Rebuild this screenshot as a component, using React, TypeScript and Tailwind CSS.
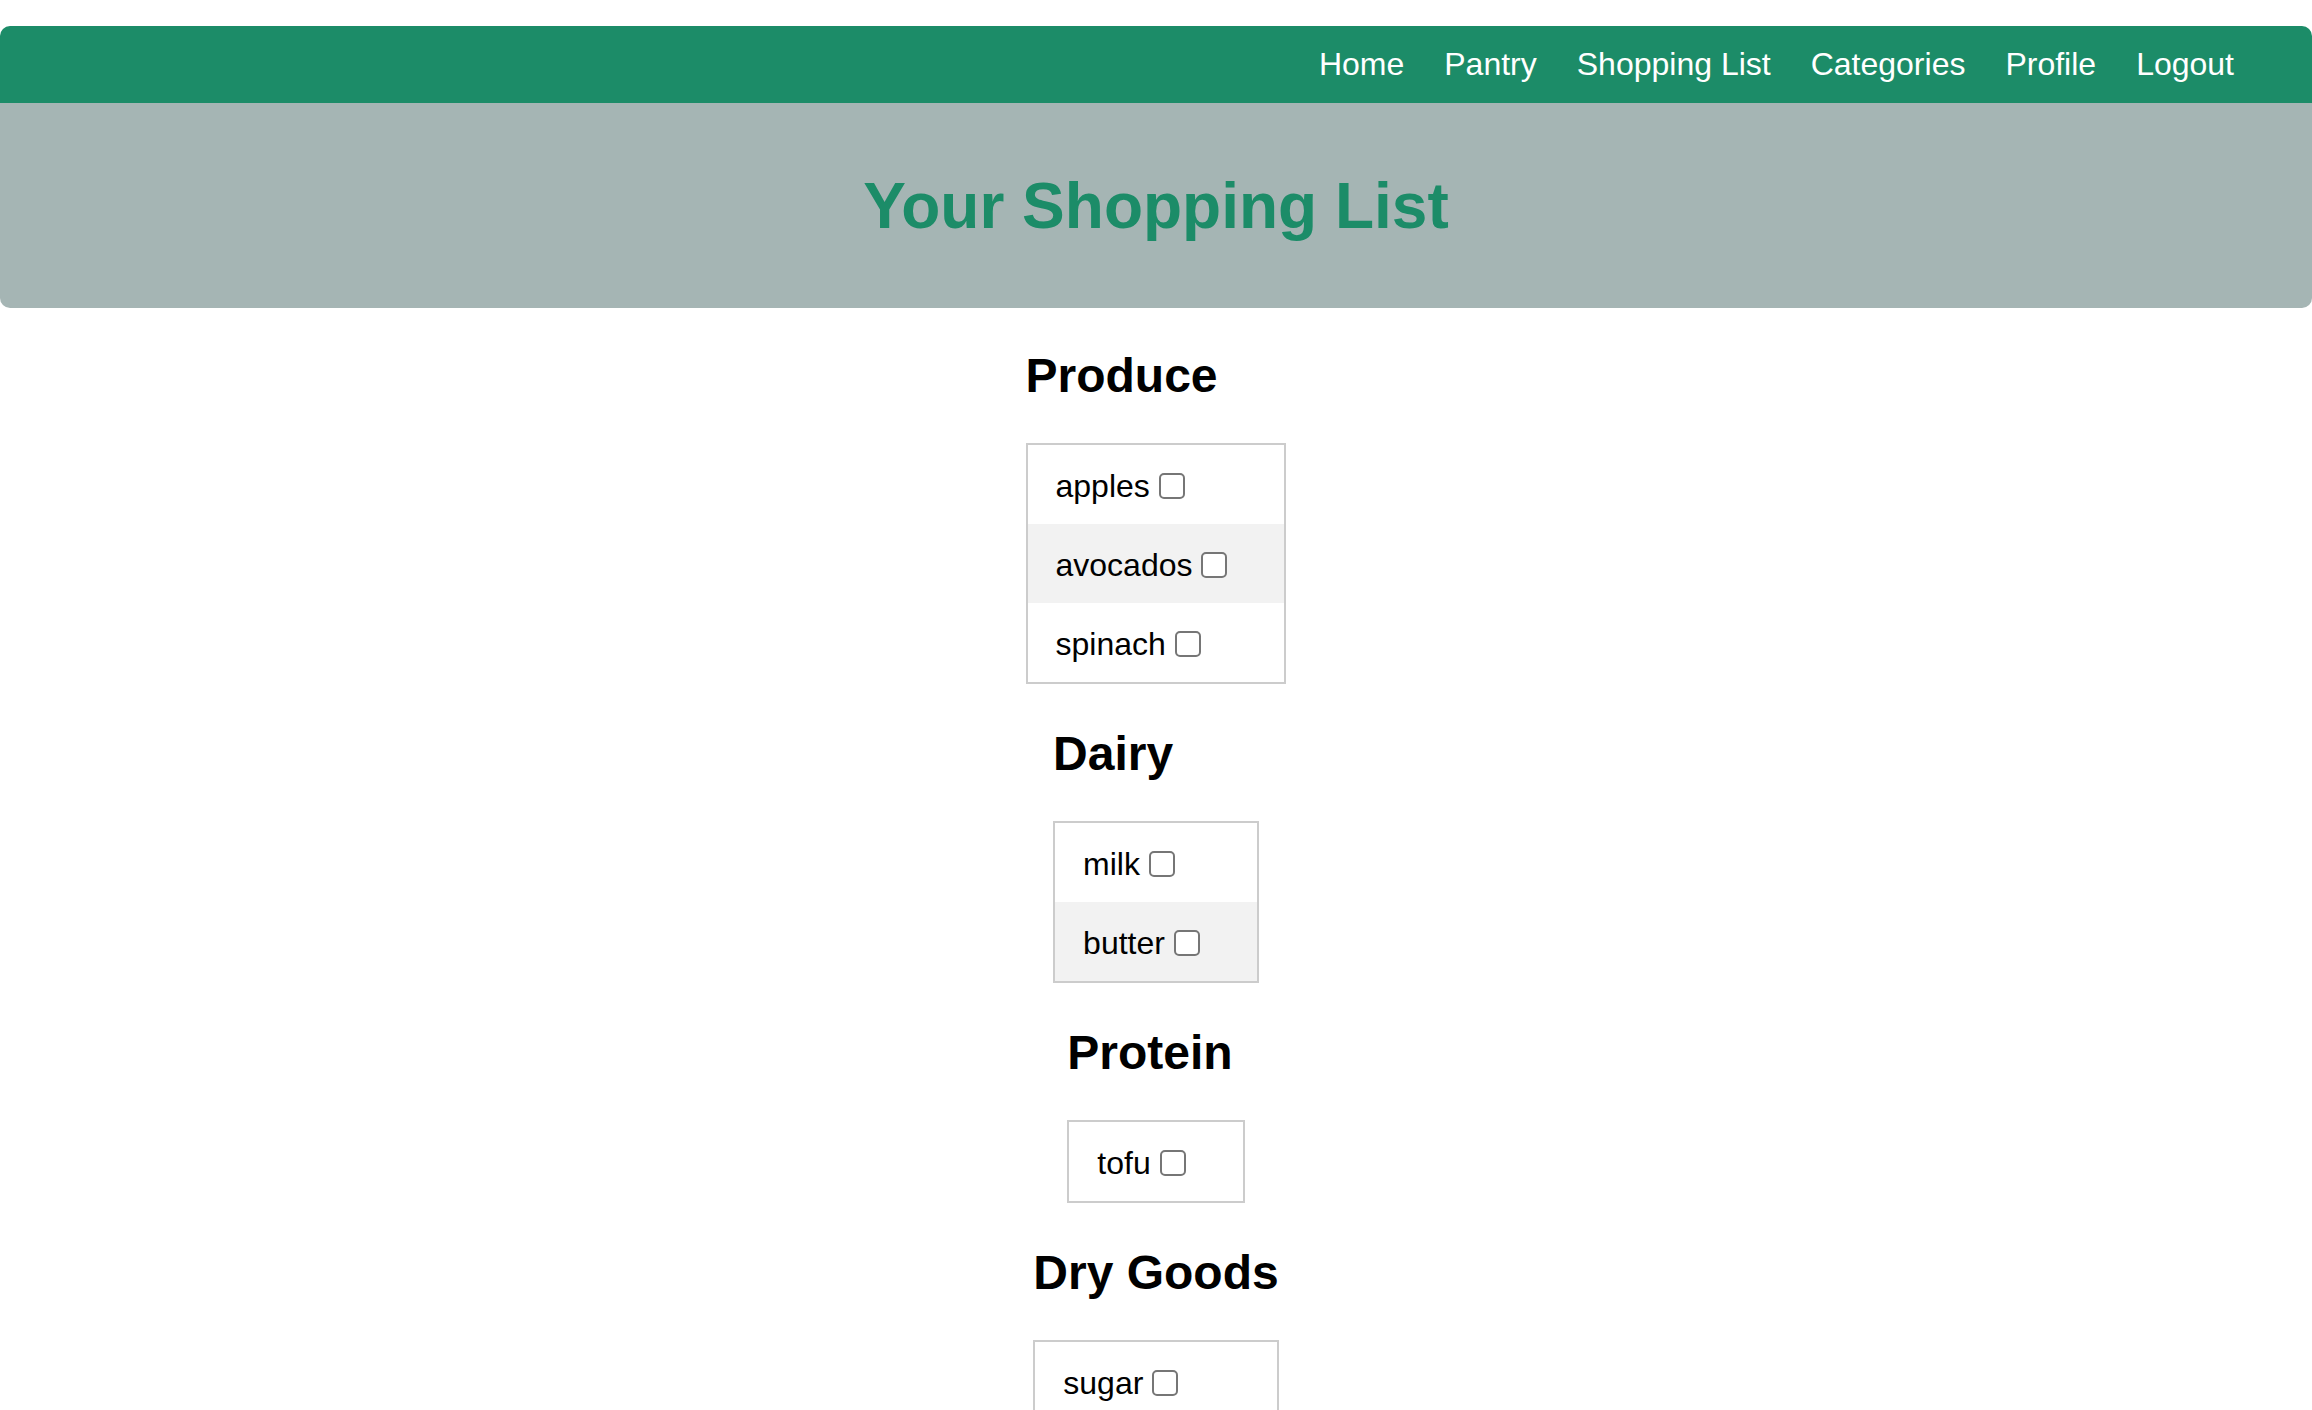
import React from "react";

const categories: { name: string; items: string[] }[] = [
  { name: "Produce", items: ["apples", "avocados", "spinach"] },
  { name: "Dairy", items: ["milk", "butter"] },
  { name: "Protein", items: ["tofu"] },
  { name: "Dry Goods", items: ["sugar"] },
];

const navLinks = ["Home", "Pantry", "Shopping List", "Categories", "Profile", "Logout"];

export default function App() {
  return (
    <div
      className="h-screen overflow-hidden bg-white text-black"
      style={{ fontFamily: '"Liberation Sans", Arial, Helvetica, sans-serif' }}
    >
      <header className="mt-[26px] rounded-[10px] overflow-hidden">
        <nav className="h-[77px] bg-[#1c8c68] flex items-center justify-end gap-[40px] pr-[78px]">
          {navLinks.map((l) => (
            <a key={l} href="#" className="text-white text-[32px] leading-[37px] no-underline">
              {l}
            </a>
          ))}
        </nav>
        <div className="h-[205px] bg-[#a5b5b4] flex items-center justify-center">
          <h1 className="text-[64px] leading-[74px] font-bold text-[#1c8c68]">Your Shopping List</h1>
        </div>
      </header>
      <main className="flex flex-col items-center">
        {categories.map((c, ci) => (
          <section key={c.name} className="w-fit">
            <h2
              className={`text-[48px] leading-[55px] font-bold mb-[40px] whitespace-nowrap ${
                ci === 0 ? "mt-[40px]" : "mt-[42px]"
              }`}
            >
              {c.name}
            </h2>
            <ul className="border-2 border-[#cccccc]">
              {c.items.map((it, i) => (
                <li
                  key={it}
                  className={`h-[79px] flex items-center gap-[9px] pt-[4px] pl-[28px] pr-[57px] text-[32px] leading-[37px] whitespace-nowrap ${
                    i % 2 === 1 ? "bg-[#f2f2f2]" : "bg-white"
                  }`}
                >
                  <span>{it}</span>
                  <input
                    type="checkbox"
                    className="appearance-none w-[26px] h-[26px] border-2 border-[#767676] rounded-[5px] bg-white shrink-0 -mt-[2px]"
                  />
                </li>
              ))}
            </ul>
          </section>
        ))}
      </main>
    </div>
  );
}
